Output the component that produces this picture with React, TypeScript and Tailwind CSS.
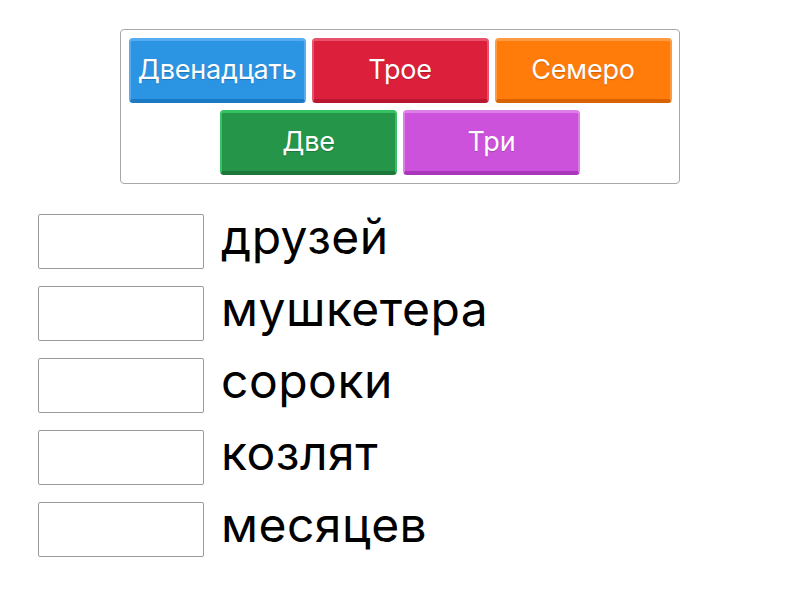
const tiles = [
  [
    { label: "Двенадцать", face: "bg-[#2b95e3]", edge: "border-[#55acf0] border-b-[#1c79c4]" },
    { label: "Трое", face: "bg-[#dc1f3b]", edge: "border-[#e6536a] border-b-[#b8172f]" },
    { label: "Семеро", face: "bg-[#ff7b0a]", edge: "border-[#ff9a45] border-b-[#d96300]" },
  ],
  [
    { label: "Две", face: "bg-[#25954a]", edge: "border-[#35c262] border-b-[#1b773a]" },
    { label: "Три", face: "bg-[#cc52dc]", edge: "border-[#dc80e8] border-b-[#aa36bc]" },
  ],
];

const words = ["друзей", "мушкетера", "сороки", "козлят", "месяцев"];

export default function App() {
  return (
    <main className="w-[800px] h-[600px] bg-white font-['Inter',sans-serif]">
      <div className="pt-[29px] flex justify-center">
        <div className="w-[560px] border border-[#a8a8a8] rounded-[4px] px-[7px] py-[8px] flex flex-col gap-[7px]">
          {tiles.map((row, i) => (
            <div key={i} className="flex justify-center gap-[6px]">
              {row.map((t) => (
                <div
                  key={t.label}
                  className={`w-[177px] h-[65px] rounded-[4px] border-x-2 border-t-[3px] border-b-[4px] ${t.face} ${t.edge} flex items-center justify-center text-white text-[27px] tracking-[-0.2px] [text-shadow:0_1px_1px_rgba(0,0,0,0.2)]`}
                >
                  {t.label}
                </div>
              ))}
            </div>
          ))}
        </div>
      </div>

      <div className="mt-[30px] pl-[38px] flex flex-col gap-[17px]">
        {words.map((w) => (
          <div key={w} className="h-[55px] flex items-center gap-[17px]">
            <div className="w-[166px] h-[55px] shrink-0 border border-[#9a9a9a] rounded-[2px] bg-white" />
            <span className="text-[48px] leading-none tracking-[0.5px] pb-[9px] text-black">{w}</span>
          </div>
        ))}
      </div>
    </main>
  );
}
